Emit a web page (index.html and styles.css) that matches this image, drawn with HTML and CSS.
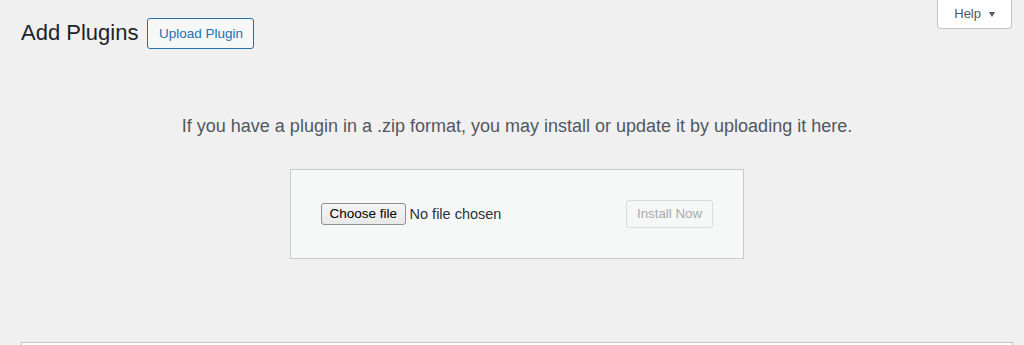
FILE: index.html
```html
<!DOCTYPE html>
<html lang="en">
<head>
<meta charset="utf-8">
<title>Add Plugins</title>
<link rel="stylesheet" href="styles.css">
</head>
<body>
<header class="top">
  <div class="title-row">
    <h1 class="page-title">Add Plugins</h1>
    <a class="title-action" href="#">Upload Plugin</a>
  </div>
  <button class="help-tab" type="button">Help <span class="caret"></span></button>
</header>
<main class="wrap">
  <p class="install-help">If you have a plugin in a .zip format, you may install or update it by uploading it here.</p>
  <form class="upload-form">
    <label class="file-field">
      <span class="file-button">Choose file</span>
      <span class="file-name">No file chosen</span>
    </label>
    <button class="install-button" type="button" disabled>Install Now</button>
  </form>
  <div class="plugin-list"></div>
</main>
</body>
</html>
```
FILE: styles.css
```css
html, body {
  margin: 0;
  padding: 0;
}
body {
  background: #f0f0f1;
  font-family: "Liberation Sans", Arial, sans-serif;
  color: #1d2327;
  overflow: hidden;
}
.top {
  display: flex;
  justify-content: space-between;
  align-items: flex-start;
  padding: 0 12px 0 21px;
}
.title-row {
  display: flex;
  align-items: center;
  gap: 9px;
  padding-top: 18px;
}
.page-title {
  margin: 0;
  font-size: 22px;
  font-weight: 400;
  line-height: 1.3;
  color: #1d2327;
}
.title-action {
  display: block;
  box-sizing: border-box;
  height: 31px;
  line-height: 29px;
  padding: 0 10.5px;
  border: 1px solid #2271b1;
  border-radius: 3px;
  background: #f6f7f7;
  color: #2271b1;
  font-size: 13.5px;
  text-decoration: none;
}
.help-tab {
  display: flex;
  align-items: center;
  gap: 8px;
  box-sizing: border-box;
  height: 29px;
  padding: 0 16px 0 16px;
  border: 1px solid #c3c4c7;
  border-top: none;
  border-radius: 0 0 4px 4px;
  background: #fff;
  color: #50575e;
  font-family: inherit;
  font-size: 13px;
  line-height: 28px;
}
.caret {
  display: block;
  width: 0;
  height: 0;
  border-left: 3.5px solid transparent;
  border-right: 3.5px solid transparent;
  border-top: 5px solid #50575e;
}
.wrap {
  padding: 0 11px 0 21px;
}
.install-help {
  margin: 0;
  padding: 65px 0 0;
  font-size: 18px;
  line-height: 1.4;
  text-align: center;
  color: #50575e;
}
.upload-form {
  display: flex;
  justify-content: space-between;
  align-items: center;
  box-sizing: border-box;
  width: 454px;
  margin: 30px auto 0;
  padding: 30px;
  background: #f6f7f7;
  border: 1px solid #c9cacd;
}
.file-field {
  display: flex;
  align-items: center;
  gap: 4px;
}
.file-button {
  box-sizing: border-box;
  height: 22px;
  line-height: 20px;
  padding: 0 7.5px;
  border: 1px solid #8f8f8f;
  border-radius: 3px;
  background: linear-gradient(#f4f4f4, #e9e9e9);
  color: #000;
  font-size: 13.5px;
}
.file-name {
  font-size: 14.5px;
  color: #2c3338;
}
.install-button {
  box-sizing: border-box;
  height: 28px;
  padding: 0 10px;
  border: 1px solid #dcdcde;
  border-radius: 3px;
  background: #f6f7f7;
  color: #a7aaad;
  font-family: inherit;
  font-size: 13.3px;
  line-height: 26px;
}
.plugin-list {
  margin-top: 83px;
  height: 40px;
  background: #fff;
  border: 1px solid #c3c4c7;
}
```
